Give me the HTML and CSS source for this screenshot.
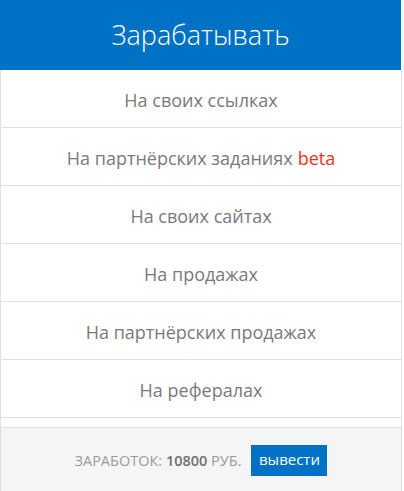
FILE: index.html
```html
<!DOCTYPE html>
<html lang="ru">
<head>
<meta charset="utf-8">
<link rel="stylesheet" href="styles.css">
</head>
<body>
<div class="panel">
  <div class="header">Зарабатывать</div>
  <ul class="list">
    <li class="item">На своих ссылках</li>
    <li class="item">На партнёрских заданиях <span class="beta">beta</span></li>
    <li class="item">На своих сайтах</li>
    <li class="item">На продажах</li>
    <li class="item">На партнёрских продажах</li>
    <li class="item">На рефералах</li>
    <li class="spacer"></li>
  </ul>
  <div class="footer">
    <span class="earn">Заработок: <b class="sum">10800</b> руб.</span>
    <button class="withdraw">вывести</button>
  </div>
</div>
</body>
</html>
```
FILE: styles.css
```css
html, body {
  margin: 0;
  padding: 0;
  background: #fff;
}
body {
  font-family: "Open Sans", "Noto Sans", sans-serif;
}
.panel {
  width: 402px;
}
.header {
  width: 401px;
  height: 70px;
  background: #0072c6;
  color: #fff;
  font-size: 27px;
  font-weight: 300;
  display: flex;
  align-items: center;
  justify-content: center;
  padding-bottom: 2px;
  box-sizing: border-box;
}
.list {
  list-style: none;
  margin: 0;
  padding: 0;
  border-left: 1px solid #e0e0e0;
  border-right: 1px solid #e0e0e0;
}
.item {
  box-sizing: border-box;
  height: 58px;
  padding-top: 2px;
  border-bottom: 1px solid #e0e0e0;
  display: flex;
  align-items: center;
  justify-content: center;
  color: #7a7a7a;
  font-size: 18px;
}
.beta {
  color: #e8341c;
  margin-left: 5px;
}
.spacer {
  height: 9px;
  border-bottom: 1px solid #e0e0e0;
}
.footer {
  background: #f5f5f5;
  border-left: 1px solid #e0e0e0;
  border-right: 1px solid #e0e0e0;
  display: flex;
  align-items: center;
  justify-content: center;
  gap: 10px;
  padding: 17px 0;
}
.earn {
  text-transform: uppercase;
  color: #9a9a9a;
  font-size: 14.5px;
}
.sum {
  color: #6f6f6f;
  font-weight: 600;
}
.withdraw {
  background: #0072c6;
  color: #fff;
  border: 0;
  font-family: inherit;
  font-size: 15px;
  height: 31px;
  width: 76px;
  padding: 0 0 3px;
}
```
